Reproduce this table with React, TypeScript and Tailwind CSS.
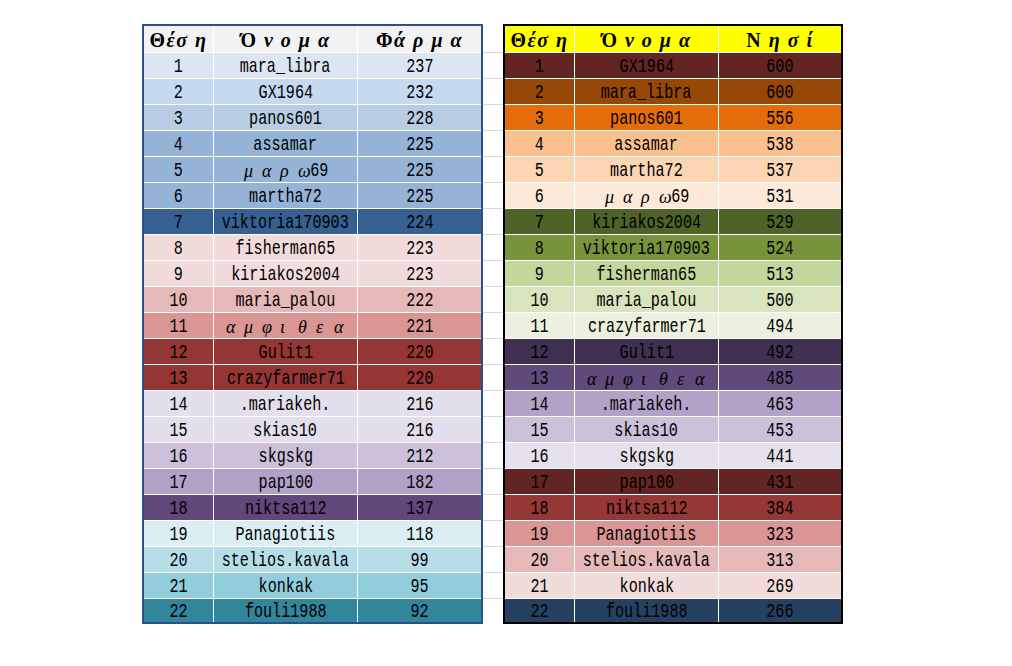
type Row = [number, string, number, string];

const farma: Row[] = [
  [1, "mara_libra", 237, "bg-[#dce6f1]"],
  [2, "GX1964", 232, "bg-[#c5d9f1]"],
  [3, "panos601", 228, "bg-[#b8cce4]"],
  [4, "assamar", 225, "bg-[#95b3d7]"],
  [5, "μ α ρ ω69", 225, "bg-[#95b3d7]"],
  [6, "martha72", 225, "bg-[#95b3d7]"],
  [7, "viktoria170903", 224, "bg-[#366092]"],
  [8, "fisherman65", 223, "bg-[#f2dcdb]"],
  [9, "kiriakos2004", 223, "bg-[#f2dcdb]"],
  [10, "maria_palou", 222, "bg-[#e6b8b7]"],
  [11, "α μ φ ι θ ε α", 221, "bg-[#da9694]"],
  [12, "Gulit1", 220, "bg-[#963634]"],
  [13, "crazyfarmer71", 220, "bg-[#963634]"],
  [14, ".mariakeh.", 216, "bg-[#e4dfec]"],
  [15, "skias10", 216, "bg-[#e4dfec]"],
  [16, "skgskg", 212, "bg-[#ccc0da]"],
  [17, "pap100", 182, "bg-[#b1a0c7]"],
  [18, "niktsa112", 137, "bg-[#60497a]"],
  [19, "Panagiotiis", 118, "bg-[#daeef3]"],
  [20, "stelios.kavala", 99, "bg-[#b7dee8]"],
  [21, "konkak", 95, "bg-[#92cddc]"],
  [22, "fouli1988", 92, "bg-[#31869b]"],
];

const nisi: Row[] = [
  [1, "GX1964", 600, "bg-[#632523]"],
  [2, "mara_libra", 600, "bg-[#974706]"],
  [3, "panos601", 556, "bg-[#e46c0a]"],
  [4, "assamar", 538, "bg-[#fac090]"],
  [5, "martha72", 537, "bg-[#fcd5b5]"],
  [6, "μ α ρ ω69", 531, "bg-[#fde9d9]"],
  [7, "kiriakos2004", 529, "bg-[#4f6228]"],
  [8, "viktoria170903", 524, "bg-[#77933c]"],
  [9, "fisherman65", 513, "bg-[#c3d69b]"],
  [10, "maria_palou", 500, "bg-[#d7e4bd]"],
  [11, "crazyfarmer71", 494, "bg-[#ebf1de]"],
  [12, "Gulit1", 492, "bg-[#403152]"],
  [13, "α μ φ ι θ ε α", 485, "bg-[#604a7b]"],
  [14, ".mariakeh.", 463, "bg-[#b3a2c7]"],
  [15, "skias10", 453, "bg-[#ccc1da]"],
  [16, "skgskg", 441, "bg-[#e6e0ec]"],
  [17, "pap100", 431, "bg-[#632523]"],
  [18, "niktsa112", 384, "bg-[#953735]"],
  [19, "Panagiotiis", 323, "bg-[#d99694]"],
  [20, "stelios.kavala", 313, "bg-[#e6b9b8]"],
  [21, "konkak", 269, "bg-[#f2dcdb]"],
  [22, "fouli1988", 266, "bg-[#254061]"],
];

const mono = "font-['Liberation_Mono',monospace] text-[21px] leading-none inline-block scale-x-[0.72] whitespace-pre";

function Cell({ text }: { text: string }) {
  // greek user names are set letter by letter in italic serif
  if (/[α-ω]/.test(text)) {
    return (
      <span className="inline-flex items-center">
        {text.split("").map((c, i) =>
          /[α-ω]/.test(c) ? (
            <span key={i} className="w-[11px] font-['Liberation_Serif',serif] italic text-[18px] leading-none">
              {c}
            </span>
          ) : c === " " ? (
            <span key={i} className="w-[7px]" />
          ) : (
            <span key={i} className="w-[9px] text-center font-['Liberation_Mono',monospace] text-[21px] leading-none inline-block scale-x-[0.72]">
              {c}
            </span>
          )
        )}
      </span>
    );
  }
  return <span className={mono}>{text}</span>;
}

function Head({ text }: { text: string }) {
  return (
    <span className="font-['Liberation_Serif',serif] font-bold text-[20px] tracking-[1.5px] whitespace-pre leading-none">
      {text[0]}
      <span className="italic">{text.slice(1)}</span>
    </span>
  );
}

const c1 = "w-[70px] border-r border-white flex items-center justify-center pt-[2px]";
const c2 = "w-[144px] border-r border-white flex items-center justify-center pt-[2px]";

function Table({ rows, last, head, border, w3 }: { rows: Row[]; last: string; head: string; border: string; w3: string }) {
  return (
    <div className={`border-2 ${border} text-black`}>
      <div className={`flex h-[27px] border-b border-white ${head}`}>
        <div className={c1}><Head text="Θέσ η" /></div>
        <div className={c2}><Head text="Ό ν ο μ α" /></div>
        <div className={`${w3} flex items-center justify-center pt-[2px]`}><Head text={last} /></div>
      </div>
      {rows.map(([n, name, v, bg], i) => (
        <div key={n} className={`flex ${bg} ${i === rows.length - 1 ? "h-[23px]" : "h-[26px] border-b border-white"}`}>
          <div className={c1}><Cell text={String(n)} /></div>
          <div className={c2}><Cell text={name} /></div>
          <div className={`${w3} flex items-center justify-center pt-[2px]`}><Cell text={String(v)} /></div>
        </div>
      ))}
    </div>
  );
}

export default function App() {
  return (
    <div className="w-[1012px] h-[666px] bg-white flex items-start pt-[24px] pl-[142px]">
      <Table rows={farma} last="Φά ρ μ α" head="bg-[#f2f2f2]" border="border-[#2a5087]" w3="w-[123px]" />
      <div className="w-[20px] pt-[2px]">
        <div className="h-[27px] border-b border-[#d0d7e5]" />
        {Array.from({ length: 21 }).map((_, i) => (
          <div key={i} className="h-[26px] border-b border-[#d0d7e5]" />
        ))}
      </div>
      <Table rows={nisi} last="Ν η σ ί" head="bg-[#ffff00]" border="border-black" w3="w-[122px]" />
    </div>
  );
}
